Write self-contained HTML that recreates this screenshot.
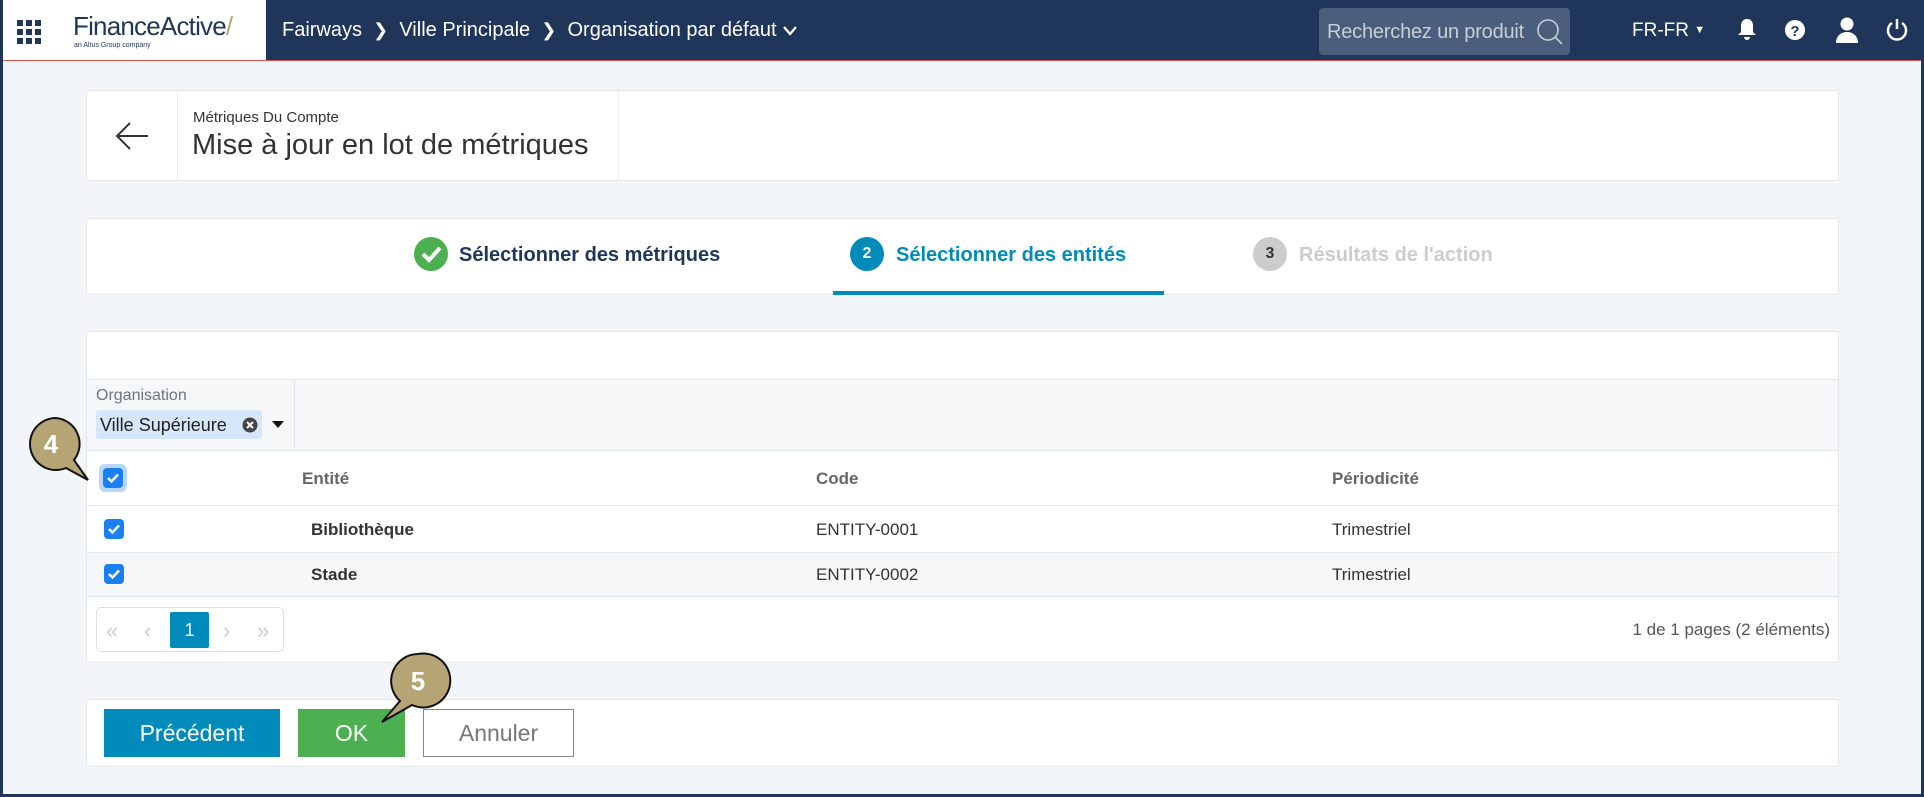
<!DOCTYPE html>
<html><head><meta charset="utf-8"><style>
*{box-sizing:border-box;margin:0;padding:0}
body{width:1924px;height:797px;overflow:hidden;background:#f3f6f9;font-family:"Liberation Sans",Arial,sans-serif;position:relative;color:#333}
.frame{position:absolute;inset:0;border:3px solid #1f3559;border-top:none;pointer-events:none;z-index:10}
.top{position:absolute;left:0;top:0;width:1924px;height:61px;background:#1f3559;border-bottom:1px solid #d9534f}
.logo{position:absolute;left:0;top:0;width:266px;height:60px;background:#fff}
.card{position:absolute;background:#fff;border:1px solid #e3e6ea;border-radius:3px}
.abs{position:absolute}
.cb{position:absolute;width:20px;height:20px;border-radius:4px;background:#1a7ff0}
.cb svg{position:absolute;left:3px;top:3px}
.btn{position:absolute;height:48px;top:709px;color:#fff;font-size:23px;display:flex;align-items:center;justify-content:center}
</style></head><body>
<div class="top">
 <div class="logo">
  <svg class="abs" style="left:17px;top:20px" width="24" height="24"><g fill="#1f3559"><rect x="0" y="0" width="6" height="6"/><rect x="9" y="0" width="6" height="6"/><rect x="18" y="0" width="6" height="6"/><rect x="0" y="9" width="6" height="6"/><rect x="9" y="9" width="6" height="6"/><rect x="18" y="9" width="6" height="6"/><rect x="0" y="18" width="6" height="6"/><rect x="9" y="18" width="6" height="6"/><rect x="18" y="18" width="6" height="6"/></g></svg>
  <div class="abs" style="left:73px;top:11px;font-size:26px;color:#1f3559;letter-spacing:-0.8px;white-space:nowrap">Finance<span style="color:#1f3559">Active</span><span style="color:#b5a574">/</span></div>
  <div class="abs" style="left:74px;top:42px;font-size:7px;color:#1f3559">an Altus Group company</div>
 </div>
 <div class="abs" style="left:282px;top:19px;color:#fff;font-size:20px;white-space:nowrap">Fairways &nbsp;<span style="font-size:18px">&#x276F;</span>&nbsp; Ville Principale &nbsp;<span style="font-size:18px">&#x276F;</span>&nbsp; Organisation par défaut <svg width="16" height="12" style="vertical-align:-1px"><path d="M2 2l6 7 6-7" fill="none" stroke="#fff" stroke-width="2.2"/></svg></div>
 <div class="abs" style="left:1319px;top:8px;width:251px;height:47px;background:#4b5e7b;border-radius:4px">
  <span class="abs" style="left:8px;top:13px;color:#c8ced8;font-size:20px;letter-spacing:-0.2px">Recherchez un produit</span>
  <svg class="abs" style="left:217px;top:10px" width="28" height="28"><circle cx="12" cy="12" r="10" fill="none" stroke="#c8ced8" stroke-width="1.6"/><line x1="19" y1="19" x2="26" y2="26" stroke="#c8ced8" stroke-width="1.6"/></svg>
 </div>
 <div class="abs" style="left:1632px;top:20px;color:#fff;font-size:19px">FR-FR <span style="font-size:11px;vertical-align:3px">&#9660;</span></div>
 <svg class="abs" style="left:1736px;top:17px" width="22" height="26"><path d="M11 2c-4 0-6 3-6 7v6l-3 3h18l-3-3V9c0-4-2-7-6-7z M8 20h6a3 3 0 0 1-6 0z" fill="#fff"/></svg>
 <svg class="abs" style="left:1784px;top:19px" width="22" height="22"><circle cx="11" cy="11" r="10" fill="#fff"/><text x="11" y="17" text-anchor="middle" font-family="Liberation Sans" font-weight="bold" font-size="15" fill="#1f3559">?</text></svg>
 <svg class="abs" style="left:1834px;top:16px" width="26" height="28"><circle cx="13" cy="8" r="6.5" fill="#fff"/><path d="M2 27c0-7 5-11 11-11s11 4 11 11z" fill="#fff"/></svg>
 <svg class="abs" style="left:1885px;top:17px" width="24" height="26"><path d="M7 6a9 9 0 1 0 10 0" fill="none" stroke="#fff" stroke-width="2.5"/><line x1="12" y1="2" x2="12" y2="12" stroke="#fff" stroke-width="2.5"/></svg>
</div>

<div class="card" style="left:86px;top:90px;width:1753px;height:91px">
 <div class="abs" style="left:90px;top:0;width:1px;height:89px;background:#eceef1"></div>
 <div class="abs" style="left:531px;top:0;width:1px;height:89px;background:#eceef1"></div>
 <svg class="abs" style="left:27px;top:30px" width="36" height="30"><path d="M16 2L3 15l13 13M3 15h31" fill="none" stroke="#333" stroke-width="2"/></svg>
 <div class="abs" style="left:106px;top:18px;font-size:15px;color:#333">Métriques Du Compte</div>
 <div class="abs" style="left:105px;top:38px;font-size:29px;color:#333">Mise à jour en lot de métriques</div>
</div>

<div class="card" style="left:86px;top:218px;width:1753px;height:77px">
 <svg class="abs" style="left:327px;top:18px" width="34" height="34"><circle cx="17" cy="17" r="17" fill="#4caf50"/><path d="M9 17l6 6 11-12" fill="none" stroke="#fff" stroke-width="4"/></svg>
 <div class="abs" style="left:372px;top:25px;font-size:20px;font-weight:bold;color:#1f3559">Sélectionner des métriques</div>
 <div class="abs" style="left:763px;top:18px;width:34px;height:34px;border-radius:50%;background:#008bba;color:#fff;font-weight:bold;font-size:16px;display:flex;align-items:center;justify-content:center">2</div>
 <div class="abs" style="left:809px;top:25px;font-size:20px;font-weight:bold;color:#008bba">Sélectionner des entités</div>
 <div class="abs" style="left:746px;top:72px;width:331px;height:4px;background:#008bba"></div>
 <div class="abs" style="left:1166px;top:18px;width:34px;height:34px;border-radius:50%;background:#ccc;color:#333;font-weight:bold;font-size:16px;display:flex;align-items:center;justify-content:center">3</div>
 <div class="abs" style="left:1212px;top:25px;font-size:20px;font-weight:bold;color:#ccc">Résultats de l'action</div>
</div>

<div class="card" style="left:86px;top:331px;width:1753px;height:332px;overflow:hidden">
 <div class="abs" style="left:0;top:47px;width:100%;height:72px;background:#f5f7f9;border-top:1px solid #e3e6ea;border-bottom:1px solid #e3e6ea"></div>
 <div class="abs" style="left:207px;top:48px;width:1px;height:70px;background:#e3e6ea"></div>
 <div class="abs" style="left:9px;top:55px;font-size:16px;color:#6c757d">Organisation</div>
 <div class="abs" style="left:9px;top:78px;width:166px;height:29px;background:#d6e6fb;border-radius:3px">
  <span class="abs" style="left:4px;top:5px;font-size:18px;color:#222">Ville Supérieure</span>
  <svg class="abs" style="left:146px;top:7px" width="16" height="16"><circle cx="8" cy="8" r="7.5" fill="#444"/><path d="M5 5l6 6M11 5l-6 6" stroke="#fff" stroke-width="2"/></svg>
 </div>
 <svg class="abs" style="left:185px;top:89px" width="12" height="8"><path d="M0 0h12L6 7z" fill="#111"/></svg>
 <div class="abs" style="left:0;top:173px;width:100%;height:1px;background:#e6e9ec"></div>
 <div class="abs" style="left:0;top:220px;width:100%;height:45px;background:#f5f7f9;border-top:1px solid #e6e9ec;border-bottom:1px solid #dcdfe3"></div>
 <div class="abs" style="left:12px;top:132px;width:28px;height:28px;border-radius:6px;background:#b8d8fb"></div>
 <div class="cb" style="left:16px;top:136px"><svg width="14" height="14"><path d="M2 7l3.5 3.5L12 3.5" fill="none" stroke="#fff" stroke-width="2.5"/></svg></div>
 <div class="cb" style="left:17px;top:187px"><svg width="14" height="14"><path d="M2 7l3.5 3.5L12 3.5" fill="none" stroke="#fff" stroke-width="2.5"/></svg></div>
 <div class="cb" style="left:17px;top:232px"><svg width="14" height="14"><path d="M2 7l3.5 3.5L12 3.5" fill="none" stroke="#fff" stroke-width="2.5"/></svg></div>
 <div class="abs" style="left:215px;top:137px;font-size:17px;font-weight:bold;color:#666">Entité</div>
 <div class="abs" style="left:729px;top:137px;font-size:17px;font-weight:bold;color:#666">Code</div>
 <div class="abs" style="left:1245px;top:137px;font-size:17px;font-weight:bold;color:#666">Périodicité</div>
 <div class="abs" style="left:224px;top:188px;font-size:17px;font-weight:bold;color:#333">Bibliothèque</div>
 <div class="abs" style="left:729px;top:188px;font-size:17px;color:#333">ENTITY-0001</div>
 <div class="abs" style="left:1245px;top:188px;font-size:17px;color:#333">Trimestriel</div>
 <div class="abs" style="left:224px;top:233px;font-size:17px;font-weight:bold;color:#333">Stade</div>
 <div class="abs" style="left:729px;top:233px;font-size:17px;color:#333">ENTITY-0002</div>
 <div class="abs" style="left:1245px;top:233px;font-size:17px;color:#333">Trimestriel</div>
 <div class="abs" style="left:9px;top:275px;width:188px;height:45px;border:1px solid #dcdfe3;border-radius:5px">
  <span class="abs" style="left:9px;top:10px;font-size:22px;color:#ccc">«</span>
  <span class="abs" style="left:47px;top:10px;font-size:22px;color:#ccc">‹</span>
  <div class="abs" style="left:73px;top:4px;width:39px;height:36px;background:#008bba;border-radius:2px;color:#fff;font-size:18px;display:flex;align-items:center;justify-content:center">1</div>
  <span class="abs" style="left:126px;top:10px;font-size:22px;color:#ccc">›</span>
  <span class="abs" style="left:160px;top:10px;font-size:22px;color:#ccc">»</span>
 </div>
 <div class="abs" style="right:8px;top:288px;font-size:17px;color:#555">1 de 1 pages (2 éléments)</div>
</div>

<div class="card" style="left:86px;top:699px;width:1753px;height:68px"></div>
<div class="btn" style="left:104px;width:176px;background:#008bba">Précédent</div>
<div class="btn" style="left:298px;width:107px;background:#4caf50">OK</div>
<div class="btn" style="left:423px;width:151px;background:#fff;border:1px solid #888;color:#777">Annuler</div>

<svg class="abs" style="left:20px;top:412px;z-index:5" width="76" height="76"><path d="M36 6a26 26 0 1 0 10 50l22 12-14-20A26 26 0 0 0 36 6z" fill="#b5a574" stroke="#111" stroke-width="2"/><text x="31" y="41" text-anchor="middle" font-family="Liberation Sans" font-weight="bold" font-size="26" fill="#fff">4</text></svg>
<svg class="abs" style="left:374px;top:648px;z-index:5" width="84" height="88"><path d="M44 6a27 27 0 0 0-18 47L8 74l30-17A27 27 0 1 0 44 6z" fill="#b5a574" stroke="#111" stroke-width="2"/><text x="44" y="42" text-anchor="middle" font-family="Liberation Sans" font-weight="bold" font-size="26" fill="#fff">5</text></svg>
<div class="frame"></div>
</body></html>
